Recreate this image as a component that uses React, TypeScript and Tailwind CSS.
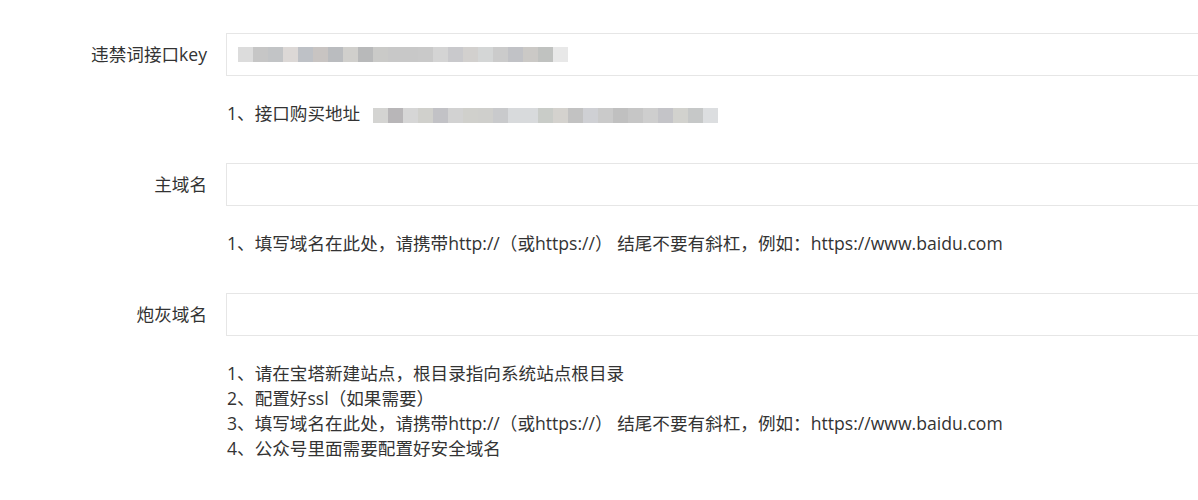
import React from "react";

const KEY_BLUR = [
  "#dcdcdc", "#c6c6c6", "#c2c4c6", "#dcd8d6", "#bec1c6", "#c8c4c2", "#babcbf", "#d0cfcc",
  "#b8b9ba", "#cacac8", "#c8c8c8", "#c8c8c8", "#c9c9c9", "#d4d4d4", "#c9c9cc", "#d2d0ce",
  "#d4d6d6", "#cbcbcb", "#c1c2c6", "#cbc9c6", "#c0c2c0", "#e8e8e8",
];

const URL_BLUR = [
  "#d4d4d2", "#b8b6b8", "#d6d6d6", "#d0d0cc", "#c2c2c6", "#d2d2d2", "#d0d0cc", "#cfcfcc",
  "#c9cacc", "#d8dadc", "#d8dadc", "#c9ccc8", "#d4d2ce", "#c2c2c2", "#cfd0d4", "#cacaca",
  "#c0c0c0", "#c6c6c6", "#cecece", "#c4c4c8", "#d2d2ce", "#c6c8c8", "#dcdee0",
];

// pixelated (redacted) strip
const Mosaic = ({ colors }: { colors: string[] }) => (
  <span className="inline-flex align-middle">
    {colors.map((c, i) => (
      <span key={i} className="block w-[15px] h-[15px]" style={{ backgroundColor: c }} />
    ))}
  </span>
);

const Field = ({
  label,
  children,
  help,
}: {
  label: string;
  children?: React.ReactNode;
  help: React.ReactNode;
}) => (
  <div className="mb-[37px]">
    <div className="flex items-center">
      <label className="w-[226px] shrink-0 pr-[19px] text-right">{label}</label>
      <div className="flex-1 h-[43px] border border-[#e6e6e6] bg-white flex items-center pl-[11px]">
        {children}
      </div>
    </div>
    <div className="pl-[227px] mt-[25px] leading-[25px]">{help}</div>
  </div>
);

export default function App() {
  return (
    <div
      className="w-full h-[500px] overflow-hidden bg-white text-[17.6px] text-[#333]"
      style={{ fontFamily: '"Open Sans", "Noto Sans CJK SC", sans-serif' }}
    >
      <div className="w-[1260px] pt-[33px]">
        <Field
          label="违禁词接口key"
          help={
            <div className="flex items-center">
              <span>1、接口购买地址</span>
              <span className="ml-[13px]">
                <Mosaic colors={URL_BLUR} />
              </span>
            </div>
          }
        >
          <Mosaic colors={KEY_BLUR} />
        </Field>

        <Field
          label="主域名"
          help={<div>1、填写域名在此处，请携带http://（或https://） 结尾不要有斜杠，例如：https://www.baidu.com</div>}
        />

        <Field
          label="炮灰域名"
          help={
            <>
              <div>1、请在宝塔新建站点，根目录指向系统站点根目录</div>
              <div>2、配置好ssl（如果需要）</div>
              <div>3、填写域名在此处，请携带http://（或https://） 结尾不要有斜杠，例如：https://www.baidu.com</div>
              <div>4、公众号里面需要配置好安全域名</div>
            </>
          }
        />
      </div>
    </div>
  );
}
